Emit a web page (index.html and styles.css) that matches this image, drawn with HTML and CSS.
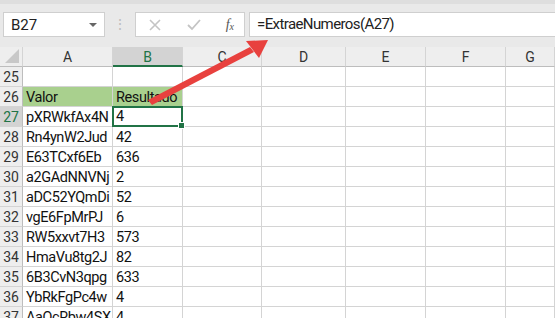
FILE: index.html
```html
<!DOCTYPE html>
<html lang="es">
<head>
    <meta charset="UTF-8">
    <title>ExtraeNumeros</title>
    <link rel="stylesheet" href="styles.css">
</head>
<body>
    <div class="sheet">
        <div class="toolbar">
            <div class="namebox">
                <span>B27</span>
                <span class="drop"></span>
            </div>
            <div class="dots">&#8942;</div>
            <div class="buttons">
                <svg class="btn" width="14" height="14" viewBox="0 0 14 14"><path d="M2 2L12 12M12 2L2 12" stroke="#c4c4c4" stroke-width="1.6" fill="none"/></svg>
                <svg class="btn" width="16" height="14" viewBox="0 0 16 14"><path d="M2 7L6 11L14 2" stroke="#c4c4c4" stroke-width="1.8" fill="none"/></svg>
                <span class="fx">f<sub>x</sub></span>
            </div>
            <div class="formula">=ExtraeNumeros(A27)</div>
        </div>

        <div class="grid">
            <div class="corner"><span class="tri"></span></div>
            <div class="colhead">A</div>
            <div class="colhead sel">B</div>
            <div class="colhead">C</div>
            <div class="colhead">D</div>
            <div class="colhead">E</div>
            <div class="colhead">F</div>
            <div class="colhead">G</div>

            <div class="rowhead">25</div>
            <div class="cell"></div><div class="cell"></div><div class="cell"></div><div class="cell"></div><div class="cell"></div><div class="cell"></div><div class="cell"></div>

            <div class="rowhead">26</div>
            <div class="cell green">Valor</div><div class="cell green">Resultado</div><div class="cell"></div><div class="cell"></div><div class="cell"></div><div class="cell"></div><div class="cell"></div>

            <div class="rowhead selrow">27</div>
            <div class="cell">pXRWkfAx4N</div><div class="cell active">4<span class="handle"></span></div><div class="cell"></div><div class="cell"></div><div class="cell"></div><div class="cell"></div><div class="cell"></div>

            <div class="rowhead">28</div>
            <div class="cell">Rn4ynW2Jud</div><div class="cell">42</div><div class="cell"></div><div class="cell"></div><div class="cell"></div><div class="cell"></div><div class="cell"></div>

            <div class="rowhead">29</div>
            <div class="cell">E63TCxf6Eb</div><div class="cell">636</div><div class="cell"></div><div class="cell"></div><div class="cell"></div><div class="cell"></div><div class="cell"></div>

            <div class="rowhead">30</div>
            <div class="cell">a2GAdNNVNj</div><div class="cell">2</div><div class="cell"></div><div class="cell"></div><div class="cell"></div><div class="cell"></div><div class="cell"></div>

            <div class="rowhead">31</div>
            <div class="cell">aDC52YQmDi</div><div class="cell">52</div><div class="cell"></div><div class="cell"></div><div class="cell"></div><div class="cell"></div><div class="cell"></div>

            <div class="rowhead">32</div>
            <div class="cell">vgE6FpMrPJ</div><div class="cell">6</div><div class="cell"></div><div class="cell"></div><div class="cell"></div><div class="cell"></div><div class="cell"></div>

            <div class="rowhead">33</div>
            <div class="cell">RW5xxvt7H3</div><div class="cell">573</div><div class="cell"></div><div class="cell"></div><div class="cell"></div><div class="cell"></div><div class="cell"></div>

            <div class="rowhead">34</div>
            <div class="cell">HmaVu8tg2J</div><div class="cell">82</div><div class="cell"></div><div class="cell"></div><div class="cell"></div><div class="cell"></div><div class="cell"></div>

            <div class="rowhead">35</div>
            <div class="cell">6B3CvN3qpg</div><div class="cell">633</div><div class="cell"></div><div class="cell"></div><div class="cell"></div><div class="cell"></div><div class="cell"></div>

            <div class="rowhead">36</div>
            <div class="cell">YbRkFgPc4w</div><div class="cell">4</div><div class="cell"></div><div class="cell"></div><div class="cell"></div><div class="cell"></div><div class="cell"></div>

            <div class="rowhead">37</div>
            <div class="cell">AaQcRbw4SX</div><div class="cell">4</div><div class="cell"></div><div class="cell"></div><div class="cell"></div><div class="cell"></div><div class="cell"></div>
        </div>

        <!-- red arrow pointing at the formula -->
        <svg class="arrow" width="555" height="318" viewBox="0 0 555 318">
            <polygon points="148,100 152,105 254,52 250,47" fill="#e8413e"/>
            <polygon points="268,40 246,41 259,58" fill="#e8413e"/>
        </svg>
    </div>
</body>
</html>
```

FILE: styles.css
```css
body {
    margin: 0;
    background: #ffffff;
    font-family: Roboto, "Liberation Sans", sans-serif;
}

.sheet {
    position: relative;
    width: 555px;
    height: 318px;
    overflow: hidden;
}

.toolbar {
    height: 47px;
    box-sizing: border-box;
    background: #e9e9e9;
    border-top: 4px solid #dedede;
    display: flex;
    align-items: flex-start;
    padding: 8px 0 0 3px;
}

.namebox {
    width: 102px;
    height: 25px;
    box-sizing: border-box;
    background: #fff;
    border: 1px solid #cfcfcf;
    display: flex;
    align-items: center;
    justify-content: space-between;
    padding: 0 7px 0 7px;
    font-size: 15px;
    color: #222;
}

.drop {
    width: 0;
    height: 0;
    border-left: 4px solid transparent;
    border-right: 4px solid transparent;
    border-top: 4px solid #666;
}

.dots {
    width: 30px;
    text-align: center;
    color: #bdbdbd;
    font-size: 14px;
    line-height: 25px;
}

.buttons {
    width: 110px;
    height: 25px;
    box-sizing: border-box;
    background: #fff;
    border: 1px solid #cfcfcf;
    display: flex;
    align-items: center;
    justify-content: space-between;
    padding: 0 10px 0 12px;
}

.fx {
    font-family: "Liberation Serif", serif;
    font-style: italic;
    font-size: 14px;
    color: #555;
}

.fx sub {
    font-size: 10px;
    vertical-align: -1px;
}

.formula {
    flex: 1;
    height: 25px;
    box-sizing: border-box;
    margin-left: 4px;
    background: #fff;
    border: 1px solid #cfcfcf;
    border-right: none;
    font-size: 15px;
    letter-spacing: -0.6px;
    line-height: 23px;
    padding-left: 7px;
    color: #222;
}

.grid {
    display: grid;
    grid-template-columns: 23px 90px 70px 79px 84px 80px 80px 1fr;
    grid-auto-rows: 20px;
}

.corner,
.colhead,
.rowhead,
.cell {
    box-sizing: border-box;
    border-right: 1px solid #d4d4d4;
    border-bottom: 1px solid #d4d4d4;
}

.corner {
    background: #eeeeee;
    border-bottom-color: #bdbdbd;
    position: relative;
}

.tri {
    position: absolute;
    right: 3px;
    bottom: 3px;
    width: 0;
    height: 0;
    border-left: 14px solid transparent;
    border-bottom: 14px solid #c8c8c8;
}

.colhead {
    background: #eeeeee;
    border-bottom-color: #bdbdbd;
    text-align: center;
    font-size: 14px;
    line-height: 20px;
    color: #333;
}

.colhead.sel {
    background: #d3d3d3;
    border-bottom: 2px solid #217346;
    color: #217346;
}

.rowhead {
    background: #eeeeee;
    border-right-color: #bdbdbd;
    text-align: center;
    font-size: 14px;
    line-height: 21px;
    color: #333;
}

.rowhead.selrow {
    background: #d3d3d3;
    color: #217346;
}

.cell {
    font-size: 14.5px;
    letter-spacing: -0.4px;
    line-height: 21px;
    padding-left: 3px;
    color: #111;
    white-space: nowrap;
    overflow: hidden;
}

.cell.green {
    background: #a9d08e;
}

.cell.active {
    position: relative;
    overflow: visible;
    border: 2px solid #217346;
    margin: -1px 0 0 -1px;
    width: calc(100% + 1px);
    height: 21px;
    line-height: 18px;
    padding-left: 2px;
}

.handle {
    position: absolute;
    right: -4px;
    bottom: -4px;
    width: 5px;
    height: 5px;
    background: #217346;
    border: 1px solid #fff;
}

.arrow {
    position: absolute;
    left: 0;
    top: 0;
}
```
